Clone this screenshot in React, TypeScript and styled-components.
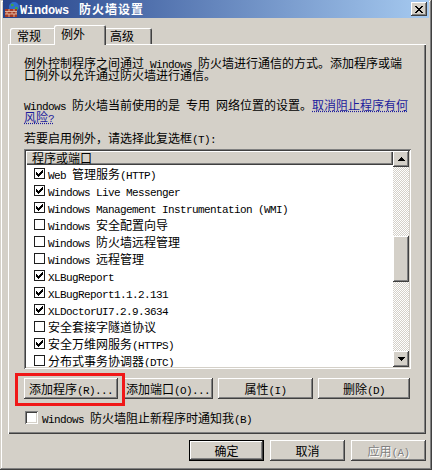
import React from 'react';
import styled, { createGlobalStyle, css } from 'styled-components';

const GlobalStyle = createGlobalStyle`
  html, body { margin: 0; padding: 0; background: #ffffff; }
  body {
    font-family: "Noto Sans CJK SC", "Noto Sans", sans-serif;
    font-size: 12px;
    color: #000000;
  }
  #root { width: 436px; height: 473px; overflow: hidden; }
`;

const raised = css`
  background: #d4d0c8;
  box-shadow: inset -1px -1px #404040, inset 1px 1px #ffffff, inset -2px -2px #808080, inset 2px 2px #d4d0c8;
`;

const sunken = css`
  box-shadow: inset 1px 1px #808080, inset -1px -1px #ffffff, inset 2px 2px #404040, inset -2px -2px #d4d0c8;
`;

/* ---------- text helpers ---------- */

const Latin = styled.span`
  font-family: "Liberation Mono", "DejaVu Sans Mono", monospace;
  font-size: 11px;
  letter-spacing: -0.6px;
  line-height: 0;
  white-space: pre;
`;

const ASCII_RUN = /([\x20-\x7E]+)/;
const isAscii = (s: string) => /^[\x20-\x7E]+$/.test(s);

function MixedText({ text }: { text: string }) {
  return (
    <>
      {text
        .split(ASCII_RUN)
        .filter((p) => p !== '')
        .map((part, i) =>
          isAscii(part) ? <Latin key={i}>{part}</Latin> : <React.Fragment key={i}>{part}</React.Fragment>
        )}
    </>
  );
}

function PixelIcon({ rows, color }: { rows: string[]; color: string }) {
  const w = rows[0].length;
  const h = rows.length;
  const rects: React.ReactNode[] = [];
  rows.forEach((r, y) =>
    r.split('').forEach((c, x) => {
      if (c === '#') rects.push(<rect key={`${x}-${y}`} x={x} y={y} width={1} height={1} />);
    })
  );
  return (
    <svg width={w} height={h} viewBox={`0 0 ${w} ${h}`} fill={color} shapeRendering="crispEdges">
      {rects}
    </svg>
  );
}

const CHECK = ['......#', '.....##', '#...###', '##.###.', '#####..', '.###...', '..#....'];
const UP = ['...#...', '..###..', '.#####.', '#######'];
const DOWN = ['#######', '.#####.', '..###..', '...#...'];
const CLOSE_X = ['##....##', '.##..##.', '..####..', '...##...', '..####..', '.##..##.', '##....##'];

/* ---------- window ---------- */

const Screen = styled.div`
  width: 436px;
  height: 473px;
  background: #ffffff;
  overflow: hidden;
`;

const Window = styled.div`
  box-sizing: border-box;
  width: 432px;
  height: 470px;
  padding: 0 3px 3px 3px;
  background: #d4d0c8;
  box-shadow: inset -1px -1px #404040, inset 1px 1px #d4d0c8, inset -2px -2px #808080, inset 2px 2px #ffffff;
  display: flex;
  flex-direction: column;
`;

const TitleBar = styled.div`
  height: 18px;
  flex-shrink: 0;
  display: flex;
  align-items: center;
  padding: 0 1px 0 1px;
  background: linear-gradient(90deg, #24428a 0%, #a6caf0 100%);
`;

const TitleText = styled.span`
  flex: 1;
  color: #ffffff;
  font-weight: bold;
  font-size: 12px;
  line-height: 12px;
  letter-spacing: 1px;
  white-space: pre;
`;

const TitleLatin = styled.span`
  font-family: "Liberation Mono", monospace;
  font-size: 12px;
  letter-spacing: -0.2px;
  line-height: 0;
  margin-right: 3px;
`;

const CloseButton = styled.div`
  ${raised};
  width: 16px;
  height: 14px;
  margin-right: 1px;
  display: flex;
  align-items: center;
  justify-content: center;
`;

function FirewallIcon() {
  return (
    <svg width="16" height="16" viewBox="0 0 16 16">
      <circle cx="10" cy="6" r="5" fill="#2f6fd0" />
      <path d="M7 3 Q9 2 10 4 Q9 6 7 5 Z" fill="#3fa34a" />
      <path d="M11 6 Q14 5 14 8 Q12 9 11 8 Z" fill="#3fa34a" />
      <rect x="1" y="8" width="12" height="8" fill="#a63a24" />
      <path d="M1 10.5 H13 M1 13 H13 M5 8 V10.5 M10 8 V10.5 M3 10.5 V13 M8 10.5 V13 M12 10.5 V13 M5 13 V16 M10 13 V16" stroke="#e8c8b0" strokeWidth="0.8" />
    </svg>
  );
}

/* ---------- body ---------- */

const Body = styled.div`
  flex: 1;
  display: flex;
  flex-direction: column;
  padding: 7px 3px 0 5px;
`;

const TabStrip = styled.div`
  height: 19px;
  display: flex;
  align-items: flex-end;
  padding-left: 2px;
  position: relative;
  z-index: 1;
`;

const Tab = styled.div<{ $active?: boolean; $w: number; $pl: number }>`
  box-sizing: border-box;
  width: ${(p) => p.$w}px;
  height: ${(p) => (p.$active ? 20 : 16)}px;
  margin-bottom: ${(p) => (p.$active ? -1 : 0)}px;
  padding-left: ${(p) => p.$pl}px;
  padding-bottom: ${(p) => (p.$active ? 2 : 0)}px;
  display: flex;
  align-items: center;
  background: #d4d0c8;
  border-top-left-radius: 2px;
  border-top-right-radius: 2px;
  box-shadow: inset 1px 1px #ffffff, inset -1px 0 #404040, inset -2px 0 #808080;
  line-height: 12px;
  position: relative;
  z-index: ${(p) => (p.$active ? 2 : 1)};
  & + & {
    margin-left: ${(p) => (p.$active ? 1 : -2)}px;
  }
`;

const Panel = styled.div`
  box-sizing: border-box;
  height: 390px;
  padding: 13px 15px 0 16px;
  background: #d4d0c8;
  box-shadow: inset 1px 1px #ffffff, inset -1px -1px #404040, inset -2px -2px #808080;
  display: flex;
  flex-direction: column;
`;

const Para = styled.div<{ $mt?: number }>`
  margin-top: ${(p) => p.$mt ?? 0}px;
  line-height: 12px;
  white-space: nowrap;
`;

const LinkText = styled.span`
  color: #1c1c9c;
  text-decoration: underline dotted #1c1c9c;
  text-underline-offset: 1px;
`;

/* ---------- list ---------- */

const ListBox = styled.div`
  box-sizing: border-box;
  margin-top: 5px;
  height: 220px;
  padding: 2px;
  background: #ffffff;
  ${sunken};
  display: flex;
`;

const ListMain = styled.div`
  flex: 1;
  display: flex;
  flex-direction: column;
  overflow: hidden;
`;

const ListHeader = styled.div`
  box-sizing: border-box;
  height: 14px;
  flex-shrink: 0;
  padding-left: 6px;
  display: flex;
  align-items: center;
  line-height: 12px;
  background: #d4d0c8;
  box-shadow: inset 1px 1px #ffffff, inset -1px -1px #404040, inset -2px -2px #808080;
`;

const Row = styled.div`
  height: 17px;
  flex-shrink: 0;
  display: flex;
  align-items: center;
  gap: 3px;
  padding-left: 8px;
  white-space: nowrap;
`;

const RowText = styled.span`
  line-height: 12px;
`;

const FlatCheck = styled.span`
  box-sizing: border-box;
  width: 11px;
  height: 11px;
  flex-shrink: 0;
  border: 1px solid #1e1e1e;
  background: #ffffff;
  display: flex;
  align-items: center;
  justify-content: center;
`;

const ScrollBar = styled.div`
  width: 16px;
  flex-shrink: 0;
  display: flex;
  flex-direction: column;
  background-color: #ffffff;
  background-image: repeating-conic-gradient(#d4d0c8 0 25%, #ffffff 0 50%);
  background-size: 2px 2px;
`;

const ScrollButton = styled.div`
  ${raised};
  height: 16px;
  flex-shrink: 0;
  display: flex;
  align-items: center;
  justify-content: center;
`;

const ScrollTrack = styled.div<{ $h?: number }>`
  ${(p) => (p.$h ? `height: ${p.$h}px; flex-shrink: 0;` : 'flex: 1;')}
`;

const ScrollThumb = styled.div`
  ${raised};
  height: 46px;
  flex-shrink: 0;
`;

/* ---------- buttons ---------- */

const ButtonRow = styled.div`
  position: relative;
  margin-top: 9px;
  display: flex;
  gap: 5px;
`;

const PushButton = styled.div<{ $w: number; $default?: boolean; $disabled?: boolean }>`
  box-sizing: border-box;
  width: ${(p) => p.$w}px;
  height: 21px;
  flex-shrink: 0;
  display: flex;
  align-items: center;
  justify-content: center;
  line-height: 12px;
  white-space: nowrap;
  background: #d4d0c8;
  box-shadow: ${(p) =>
    p.$default
      ? 'inset 0 0 0 1px #000000, inset -2px -2px #404040, inset 2px 2px #ffffff, inset -3px -3px #808080'
      : 'inset -1px -1px #404040, inset 1px 1px #ffffff, inset -2px -2px #808080'};
  color: ${(p) => (p.$disabled ? '#808080' : '#000000')};
  text-shadow: ${(p) => (p.$disabled ? '1px 1px #ffffff' : 'none')};
`;

const Highlight = styled.div`
  position: absolute;
  left: -9px;
  top: -5px;
  width: 110px;
  height: 33px;
  box-sizing: border-box;
  border: 3px solid #f01818;
  pointer-events: none;
`;

const CheckRow = styled.div`
  margin-top: 12px;
  padding-left: 1px;
  display: flex;
  align-items: center;
  gap: 4px;
  line-height: 12px;
  white-space: nowrap;
`;

const Check3D = styled.span`
  box-sizing: border-box;
  width: 13px;
  height: 13px;
  flex-shrink: 0;
  background: #ffffff;
  ${sunken};
`;

const DialogButtons = styled.div`
  margin-top: 6px;
  display: flex;
  justify-content: flex-end;
  gap: 6px;
`;

/* ---------- data ---------- */

const rows: { checked: boolean; label: string }[] = [
  { checked: true, label: 'Web 管理服务(HTTP)' },
  { checked: true, label: 'Windows Live Messenger' },
  { checked: true, label: 'Windows Management Instrumentation (WMI)' },
  { checked: false, label: 'Windows 安全配置向导' },
  { checked: false, label: 'Windows 防火墙远程管理' },
  { checked: false, label: 'Windows 远程管理' },
  { checked: true, label: 'XLBugReport' },
  { checked: true, label: 'XLBugReport1.1.2.131' },
  { checked: true, label: 'XLDoctorUI7.2.9.3634' },
  { checked: false, label: '安全套接字隧道协议' },
  { checked: true, label: '安全万维网服务(HTTPS)' },
  { checked: false, label: '分布式事务协调器(DTC)' },
];

export default function App() {
  return (
    <Screen>
      <GlobalStyle />
      <Window>
        <TitleBar>
          <FirewallIcon />
          <TitleText>
            <TitleLatin>Windows </TitleLatin>防火墙设置
          </TitleText>
          <CloseButton>
            <PixelIcon rows={CLOSE_X} color="#000000" />
          </CloseButton>
        </TitleBar>
        <Body>
          <TabStrip>
            <Tab $w={46} $pl={7}>常规</Tab>
            <Tab $w={52} $pl={7} $active>例外</Tab>
            <Tab $w={48} $pl={6}>高级</Tab>
          </TabStrip>
          <Panel>
            <Para>
              <MixedText text="例外控制程序之间通过 Windows 防火墙进行通信的方式。添加程序或端" />
              <br />
              <MixedText text="口例外以允许通过防火墙进行通信。" />
            </Para>
            <Para $mt={18}>
              <MixedText text="Windows 防火墙当前使用的是 专用 网络位置的设置。" />
              <LinkText>
                取消阻止程序有何
                <br />
                <MixedText text="风险?" />
              </LinkText>
            </Para>
            <Para $mt={9}>
              <MixedText text="若要启用例外，请选择此复选框(T):" />
            </Para>
            <ListBox>
              <ListMain>
                <ListHeader>程序或端口</ListHeader>
                {rows.map((r) => (
                  <Row key={r.label}>
                    <FlatCheck>{r.checked && <PixelIcon rows={CHECK} color="#000000" />}</FlatCheck>
                    <RowText>
                      <MixedText text={r.label} />
                    </RowText>
                  </Row>
                ))}
              </ListMain>
              <ScrollBar>
                <ScrollButton>
                  <PixelIcon rows={UP} color="#000000" />
                </ScrollButton>
                <ScrollTrack $h={69} />
                <ScrollThumb />
                <ScrollTrack />
                <ScrollButton>
                  <PixelIcon rows={DOWN} color="#000000" />
                </ScrollButton>
              </ScrollBar>
            </ListBox>
            <ButtonRow>
              <PushButton $w={94}>
                <span><MixedText text="添加程序(R)..." /></span>
              </PushButton>
              <PushButton $w={90}>
                <span><MixedText text="添加端口(O)..." /></span>
              </PushButton>
              <PushButton $w={95}>
                <span><MixedText text="属性(I)" /></span>
              </PushButton>
              <PushButton $w={92}>
                <span><MixedText text="删除(D)" /></span>
              </PushButton>
              <Highlight />
            </ButtonRow>
            <CheckRow>
              <Check3D />
              <span><MixedText text="Windows 防火墙阻止新程序时通知我(B)" /></span>
            </CheckRow>
          </Panel>
          <DialogButtons>
            <PushButton $w={75} $default>确定</PushButton>
            <PushButton $w={75}>取消</PushButton>
            <PushButton $w={75} $disabled>
              <span><MixedText text="应用(A)" /></span>
            </PushButton>
          </DialogButtons>
        </Body>
      </Window>
    </Screen>
  );
}
